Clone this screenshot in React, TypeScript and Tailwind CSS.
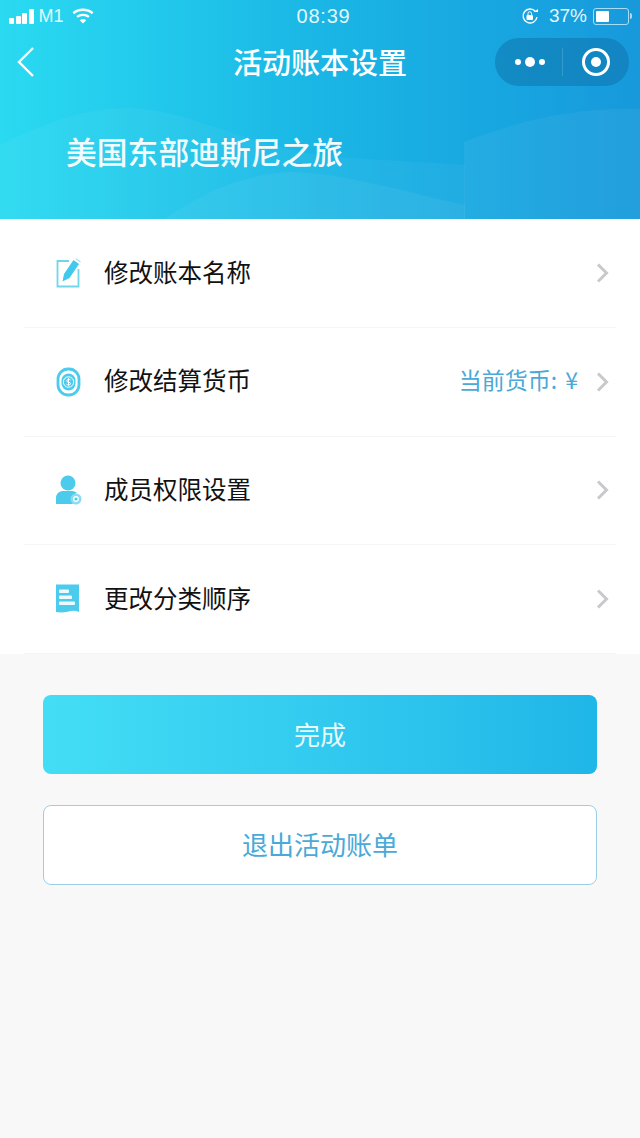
const cjk = "font-['Noto_Sans_CJK_SC','Noto_Sans',sans-serif]";

function Chevron() {
  return (
    <svg width="14" height="22" viewBox="0 0 14 22" fill="none" className="shrink-0">
      <path d="M2 2.500L10.500 11L2 19.500" stroke="#c8c9cc" strokeWidth="3" />
    </svg>
  );
}

function EditIcon() {
  return (
    <svg width="26" height="30" viewBox="0 0 26 30" fill="none">
      <path d="M13 3H1.500v25.500h21V11" stroke="#72d6ea" strokeWidth="1.800" />
      <path d="M17.500 2l5.500 4L13.500 20 6.500 23.500 8 16z" fill="#3fc9ee" />
      <path d="M20 .8l4.500 3.200" stroke="#9ee3f2" strokeWidth="1.200" />
    </svg>
  );
}

function CoinIcon() {
  return (
    <svg width="26" height="30" viewBox="0 0 26 30" fill="none">
      <rect x="2" y="2" width="21" height="26" rx="10" stroke="#4ccbec" strokeWidth="2.800" />
      <rect x="5.500" y="6.500" width="14" height="17" rx="7" fill="#4ccbec" />
      <circle cx="12.500" cy="15" r="5.200" fill="none" stroke="#ffffff" strokeWidth="1" />
      <path d="M14.600 12.900c-.6-.7-3.900-1-3.900 1 0 1.900 3.900 .9 3.900 2.700 0 1.700-3.300 1.500-4.100 .6M12.500 11.200v7.600" stroke="#ffffff" strokeWidth="1" />
    </svg>
  );
}

function MemberIcon() {
  return (
    <svg width="26" height="30" viewBox="0 0 26 30" fill="none">
      <circle cx="12" cy="8" r="7.500" fill="#4ccbec" />
      <path d="M0 29v-6c0-4 3-7 7-7h9c2 0 4 1 5 2-4 1-6 6-4 11z" fill="#4ccbec" />
      <circle cx="20" cy="24" r="4.200" fill="#ffffff" stroke="#8bdcf1" strokeWidth="2.600" />
      <circle cx="20" cy="24" r="1.600" fill="#4ccbec" />
    </svg>
  );
}

function ListIcon() {
  return (
    <svg width="26" height="30" viewBox="0 0 26 30" fill="none">
      <path d="M0 .5h23v27.500c-3.500-1.600-7-1.400-11.500 -.3-4 1-8 .8-11.500 .3z" fill="#4ccbec" />
      <rect x="3" y="5.500" width="10" height="3.400" rx="1" fill="#ffffff" fillOpacity=".9" />
      <rect x="3" y="11.500" width="13" height="3.400" rx="1" fill="#ffffff" fillOpacity=".9" />
      <rect x="3" y="17.500" width="16" height="3.400" rx="1" fill="#ffffff" fillOpacity=".9" />
    </svg>
  );
}

function StatusBar() {
  return (
    <div className="flex h-[32px] items-center justify-between pl-[9px] pr-[8px] text-[19px] text-[#e3f7fc] font-['Liberation_Sans',sans-serif]">
      <div className="flex w-[200px] items-center">
        <div className="flex items-end gap-[1.500px]">
          <div className="h-[6px] w-[5px] rounded-[1px] bg-white" />
          <div className="h-[8px] w-[5px] rounded-[1px] bg-white" />
          <div className="h-[11px] w-[5px] rounded-[1px] bg-white" />
          <div className="h-[15px] w-[5px] rounded-[1px] bg-white" />
        </div>
        <span className="ml-[5px] text-[18px]">M1</span>
        <svg width="22" height="16" viewBox="0 0 24 17" className="ml-[8px]" fill="none">
          <path d="M1.500 5.500C7 .5 17 .5 22.500 5.500" stroke="#fff" strokeWidth="2.600" />
          <path d="M5.500 9.500c3.500-3 9.500-3 13 0" stroke="#fff" strokeWidth="2.600" />
          <path d="M8.500 13c2-1.500 5-1.500 7 0l-3.500 3.800z" fill="#fff" />
        </svg>
      </div>
      <span className="ml-[6px] text-[20px] tracking-[0.800px]">08:39</span>
      <div className="flex w-[200px] items-center justify-end">
        <svg width="18" height="18" viewBox="0 0 18 18" fill="none">
          <path d="M16 10a7 7 0 1 1-1.500-5.500" stroke="#fff" strokeWidth="1.400" />
          <path d="M13 5h4V2z" fill="#fff" />
          <rect x="5.500" y="8" width="6.500" height="5" rx="1" fill="#fff" />
          <path d="M7 8V6.500a1.700 1.700 0 0 1 3.500 0V8" stroke="#fff" strokeWidth="1" />
        </svg>
        <span className="ml-[10px]">37%</span>
        <div className="ml-[6px] flex h-[17px] w-[36px] items-center rounded-[3px] border border-[#a8dcf4] p-[2px]">
          <div className="h-full w-[13px] rounded-[1px] bg-white" />
        </div>
        <div className="ml-[1px] h-[6px] w-[2px] rounded-r-sm bg-[#a8dcf4]" />
      </div>
    </div>
  );
}

function Row({ icon, label, extra }: { icon: React.ReactNode; label: string; extra?: string }) {
  return (
    <div className="mx-[24px] flex h-[108.750px] items-center border-b border-[#f5f5f6] pl-[32px] pr-[6px]">
      <div className="flex w-[48px] shrink-0 items-center">{icon}</div>
      <span className="flex-1 pb-[2px] text-[24.500px] text-[#111111]">{label}</span>
      {extra && (
        <span className="mr-[18px] flex items-center gap-[8px] pb-[4px] text-[23px] text-[#4aa9d6]">
          {extra}
          <span>¥</span>
        </span>
      )}
      <Chevron />
    </div>
  );
}

export default function App() {
  return (
    <div className={`flex h-[1138px] w-[640px] flex-col overflow-hidden bg-[#f8f8f9] ${cjk}`}>
      <div className="relative h-[219px] overflow-hidden bg-gradient-to-r from-[#2adaf1] via-[#1ab6e5] to-[#1799dc]">
        {/* background waves */}
        <svg width="640" height="219" viewBox="0 0 640 219" className="absolute left-0 top-0" fill="none">
          <path d="M0 145C50 120 90 107 130 108c60 2 120 38 190 47 55 6 100 6 145 10V219H0z" fill="#ffffff" fillOpacity=".045" />
          <path d="M165 219c40-28 80-45 125-47 50 0 115 20 175 33v14z" fill="#ffffff" fillOpacity=".05" />
          <path d="M464 142c50-20 110-35 176-33v110H464z" fill="#ffffff" fillOpacity=".05" />
        </svg>
        <div className="relative">
          <StatusBar />
          <div className="relative flex h-[62px] items-center justify-center">
            <svg width="20" height="32" viewBox="0 0 20 32" fill="none" className="absolute left-[16px] top-[14px]">
              <path d="M17 2L3 16L17 30" stroke="#ffffff" strokeWidth="2.400" />
            </svg>
            <span className="pb-[3px] text-[29px] font-medium text-white">活动账本设置</span>
            <div className="absolute right-[11px] top-[6px] flex h-[48px] w-[134px] items-center rounded-full bg-[#0d6fa8]/50">
              <div className="flex w-[67px] items-center justify-center gap-[4px] pl-[2px]">
                <div className="h-[6px] w-[6px] rounded-full bg-white" />
                <div className="h-[10px] w-[10px] rounded-full bg-white" />
                <div className="h-[6px] w-[6px] rounded-full bg-white" />
              </div>
              <div className="h-[28px] w-px bg-white/15" />
              <div className="flex flex-1 items-center justify-center">
                <div className="flex h-[28px] w-[28px] items-center justify-center rounded-full border-[3.500px] border-white">
                  <div className="h-[10px] w-[10px] rounded-full bg-white" />
                </div>
              </div>
            </div>
          </div>
          <div className="pl-[66px] pt-[34px] text-[30.800px] font-medium leading-[46px] text-[#f2fcfe]">
            美国东部迪斯尼之旅
          </div>
        </div>
      </div>

      <div className="bg-white">
        <Row icon={<EditIcon />} label="修改账本名称" />
        <Row icon={<CoinIcon />} label="修改结算货币" extra="当前货币:" />
        <Row icon={<MemberIcon />} label="成员权限设置" />
        <Row icon={<ListIcon />} label="更改分类顺序" />
      </div>

      <div className="flex flex-col gap-[31px] px-[43px] pt-[41px]">
        <div className="flex h-[79px] items-center justify-center rounded-[8px] bg-gradient-to-r from-[#43def5] to-[#1fb6e8] pb-[2px] text-[26px] text-[#e9fafd]">
          完成
        </div>
        <div className="flex h-[80px] items-center justify-center rounded-[8px] border border-[#9ccfe6] bg-white pb-[3px] text-[26px] text-[#4aa9d6]">
          退出活动账单
        </div>
      </div>
    </div>
  );
}
